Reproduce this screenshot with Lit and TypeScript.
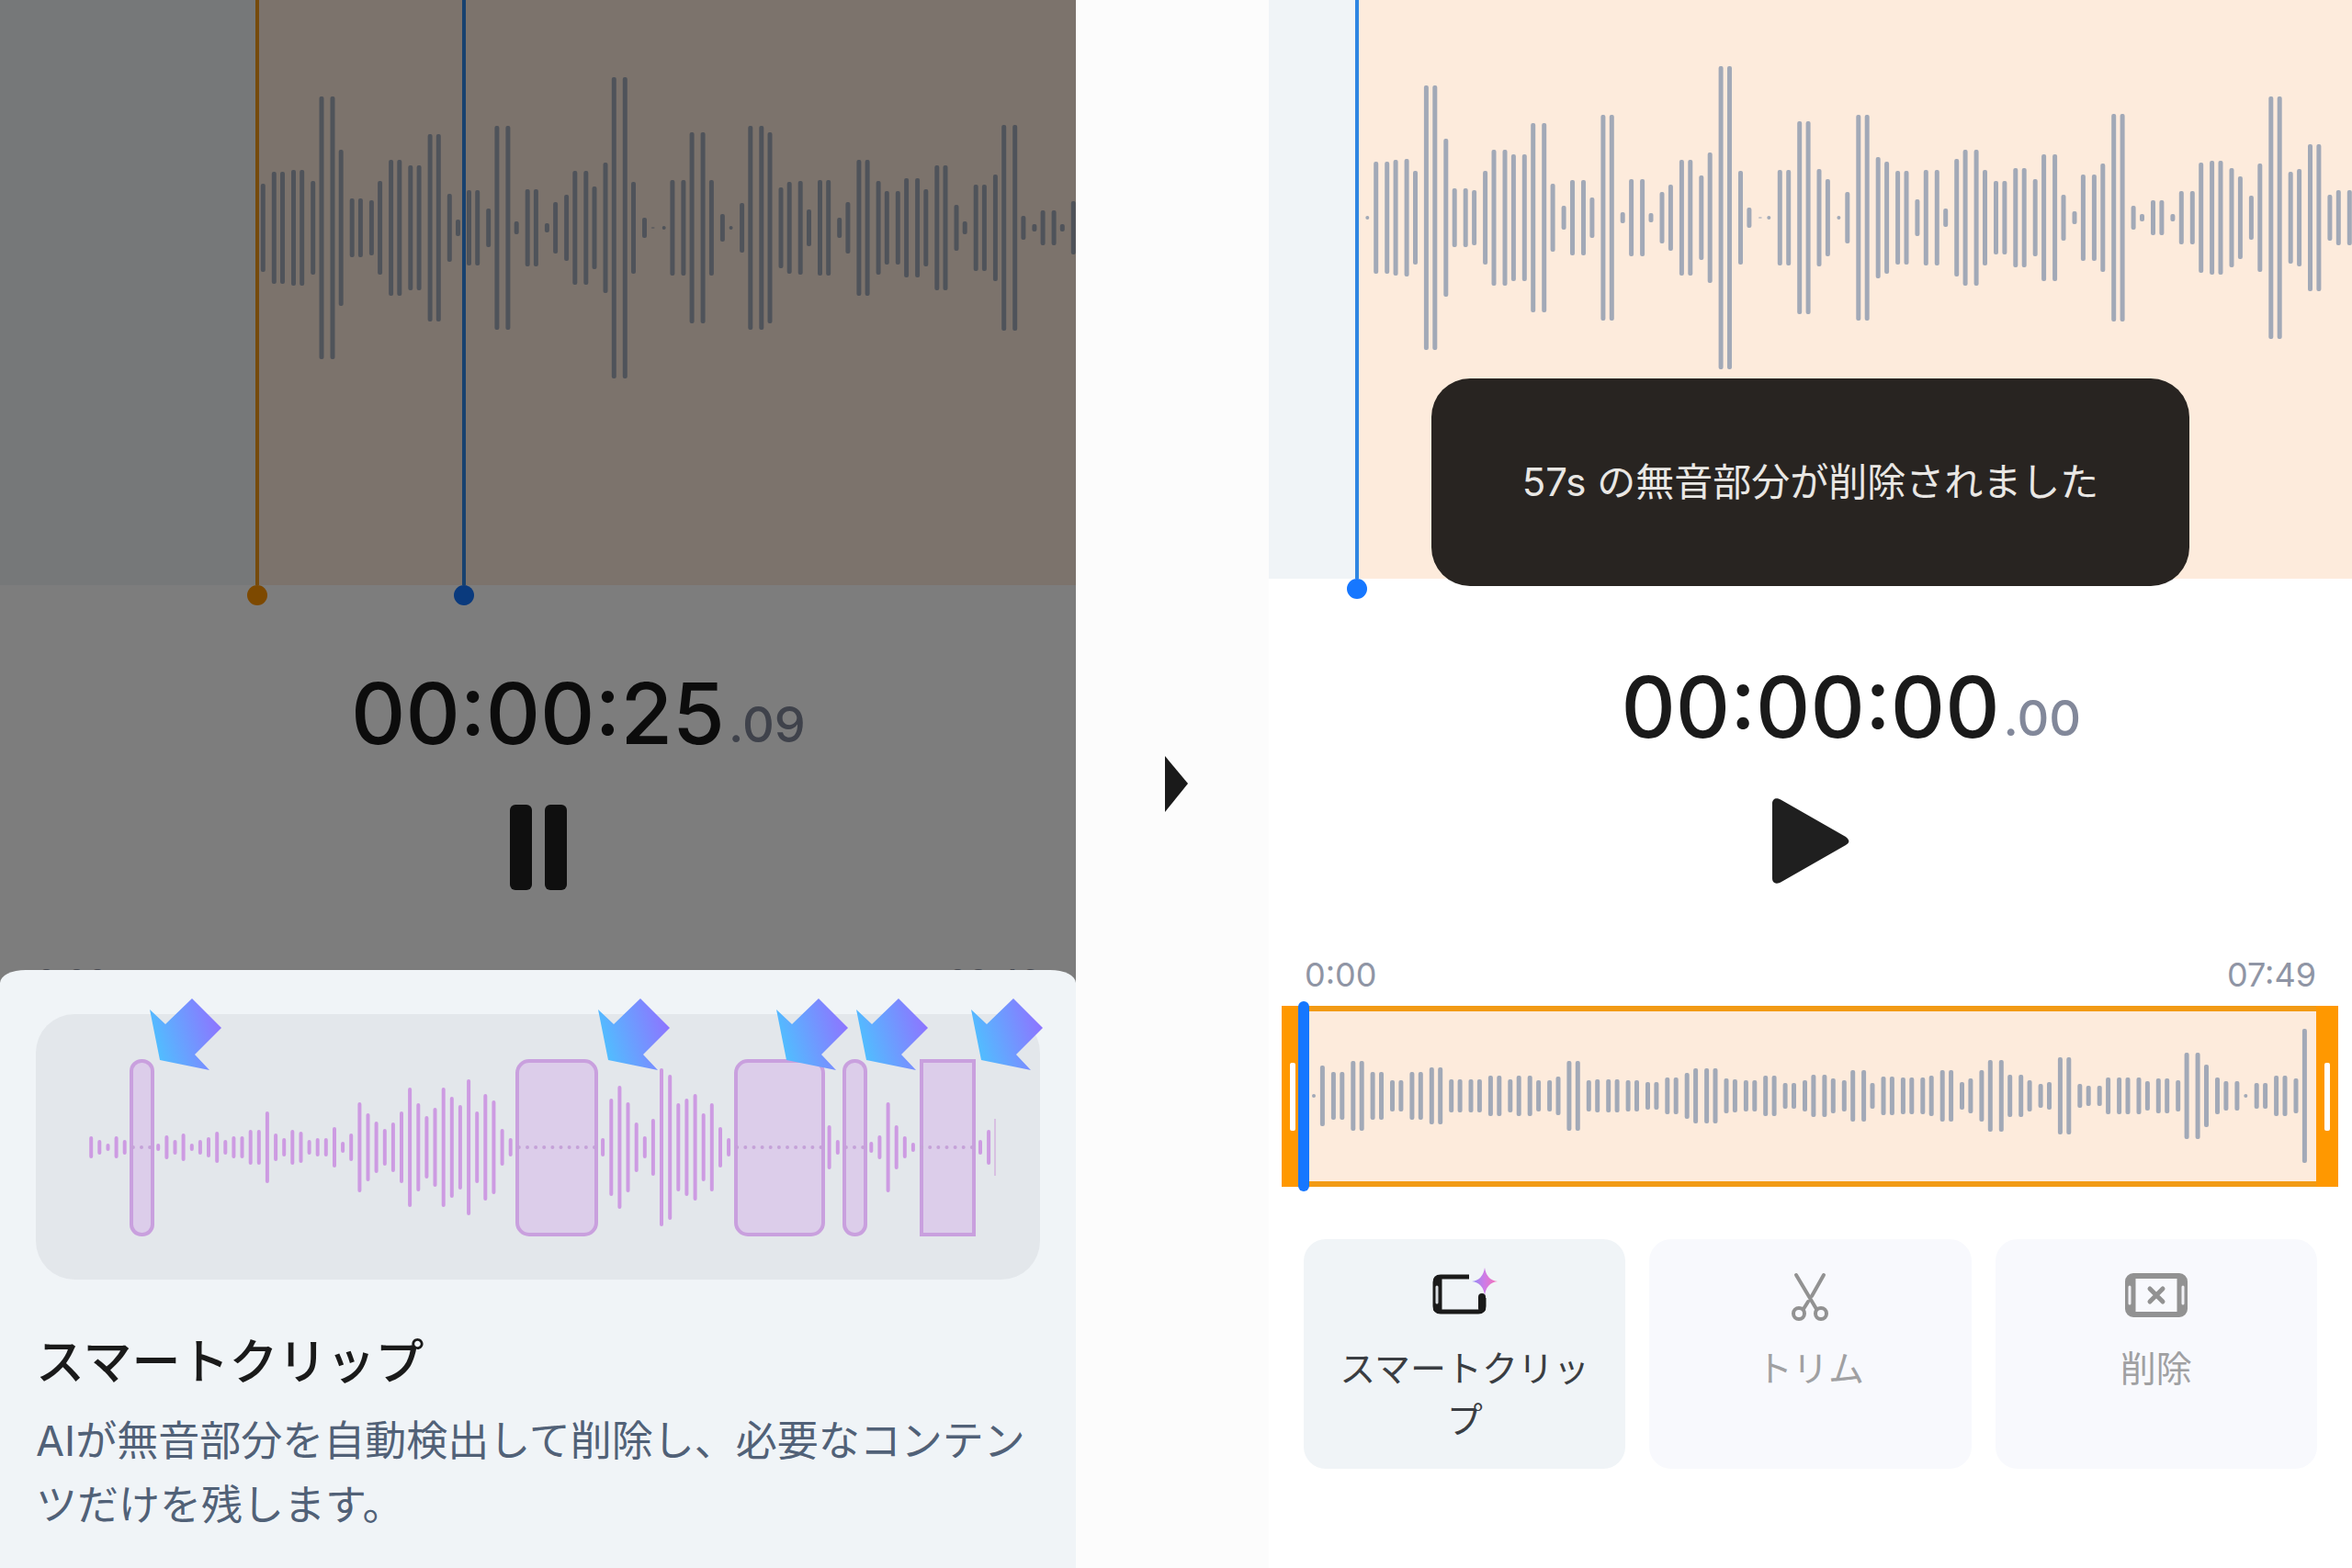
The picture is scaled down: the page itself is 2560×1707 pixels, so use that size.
import { LitElement, html, svg, css } from "lit";
import { customElement, property } from "lit/decorators.js";

/** How the bars of a waveform are spread: they come in pairs with a fixed period. */
interface Spread {
  start: number;
  period: number;
  second: number;
}

const BAR = 5;

const bars = (levels: number[], middle: number, s: Spread, cls: string) =>
  levels.map((level, i) => {
    const x = s.start + Math.floor(i / 2) * s.period + (i % 2 ? s.second : 0);
    const w = level <= 2 ? 4 : BAR;
    return svg`<rect class=${level <= 1 ? cls + " faint" : cls}
      x=${(x - w / 2).toFixed(1)} y=${middle - level} width=${w} height=${level * 2} rx="2"></rect>`;
  });

const playingLevels = [
  48, 61, 61, 63, 63, 51, 143, 143, 85, 32, 32, 30, 51, 74, 74, 68, 68, 102, 102, 37,
  9, 41, 41, 21, 111, 111, 7, 42, 42, 5, 28, 36, 62, 62, 45, 71, 164, 164, 50, 11,
  1, 2, 52, 52, 104, 104, 52, 15, 2, 27, 111, 111, 104, 44, 50, 51, 20, 52, 52, 11,
  28, 74, 74, 51, 40, 40, 54, 54, 42, 68, 68, 25, 7, 47, 47, 58, 112, 112, 13, 4,
  19, 19, 4, 29,
];

const trimmedLevels = [
  2, 61, 61, 63, 64, 51, 144, 144, 86, 32, 32, 30, 51, 74, 74, 69, 69, 103, 103, 37,
  13, 41, 41, 22, 112, 112, 6, 42, 42, 5, 28, 36, 63, 63, 46, 71, 165, 165, 51, 11,
  1, 2, 52, 52, 105, 105, 53, 42, 2, 28, 112, 112, 66, 61, 51, 51, 20, 52, 52, 10,
  64, 74, 74, 52, 40, 40, 54, 54, 42, 69, 69, 25, 7, 47, 47, 59, 113, 113, 13, 4,
  19, 19, 4, 29, 29, 60, 62, 62, 54, 45, 24, 59, 132, 132, 50, 53, 80, 80, 25, 30,
  30,
];

const overviewLevels = [
  2, 33, 26, 26, 38, 38, 26, 26, 17, 17, 26, 26, 31, 31, 18, 18, 18, 18, 22, 22,
  18, 22, 22, 17, 17, 21, 38, 38, 17, 18, 18, 18, 17, 17, 15, 15, 20, 20, 25, 30,
  30, 30, 19, 18, 17, 17, 22, 22, 14, 14, 17, 23, 23, 19, 17, 28, 28, 14, 21, 21,
  20, 20, 20, 22, 28, 28, 15, 19, 28, 39, 39, 23, 23, 17, 13, 15, 42, 42, 13, 11,
  11, 20, 20, 20, 20, 16, 19, 19, 17, 47, 47, 34, 20, 16, 16, 2, 14, 14, 22, 22,
  19, 73,
];

/** A level of 0 is silence and is drawn as a dot. */
const silence = (n: number) => new Array<number>(n).fill(0);
const clipLevels = [
  12, 8, 4, 12, 8, ...silence(3),
  4, 13, 8, 15, 4, 8, 11, 17, 8, 12, 12, 19, 19, 39, 15, 10, 19, 17, 8, 10, 10, 22,
  6, 15, 49, 37, 28, 20, 27, 39, 65, 48, 34, 43, 65, 55, 46, 74, 39, 58, 51, 20, 10,
  ...silence(10),
  10, 53, 67, 49, 27, 12, 31, 86, 79, 48, 53, 58, 37, 48, 22, 10, ...silence(11),
  24, 8, ...silence(3), 6, 13, 49, 24, 12, 5, ...silence(7), 8, 19,
];

const silentSpans = [
  { x: 104, w: 23, r: 11 },
  { x: 524, w: 86, r: 13 },
  { x: 762, w: 95, r: 13 },
  { x: 880, w: 23, r: 11 },
  { x: 964, w: 57, r: 0 },
];
const pointers = [124, 612, 806, 893, 1018];

@customElement("wave-stage")
class WaveStage extends LitElement {
  @property({ attribute: false }) levels: number[] = [];
  @property({ attribute: false }) spread!: Spread;
  @property({ type: Number }) width = 1171;
  @property({ type: Number }) height = 637;
  @property({ type: Number }) middle = 248;
  @property({ type: Number }) clipStart = 0;
  @property({ type: Number }) playhead = 0;
  @property({ type: Boolean }) marker = false;

  static styles = css`
    :host { display: block; position: relative; }
    .wave { display: block; width: 100%; height: auto; }
    .before { fill: #f0f4f7; }
    .clip { fill: #fdebdc; }
    .bar { fill: #a2a9b7; }
    .faint { opacity: 0.6; }
    .line {
      position: absolute; top: 0; bottom: 0; width: 4px;
      transform: translateX(-50%); background: #2f86e2;
    }
    .line::after {
      content: ""; position: absolute; left: -9px; bottom: -22px;
      width: 22px; height: 22px; border-radius: 50%; background: #1677ff;
    }
    .line.start { background: #f09a1a; }
    .line.start::after { background: #ff9500; }
  `;

  render() {
    const at = (x: number) => `left:${((x / this.width) * 100).toFixed(3)}%`;
    return html`
      <svg class="wave" viewBox="0 0 ${this.width} ${this.height}" aria-hidden="true">
        <rect class="before" width=${this.clipStart} height=${this.height}></rect>
        <rect class="clip" x=${this.clipStart} width=${this.width - this.clipStart} height=${this.height}></rect>
        ${bars(this.levels, this.middle, this.spread, "bar")}
      </svg>
      ${this.marker ? html`<div class="line start" style=${at(this.clipStart)}></div>` : null}
      <div class="line" style=${at(this.playhead)}></div>
      <slot></slot>
    `;
  }
}

@customElement("time-readout")
class TimeReadout extends LitElement {
  @property() main = "";
  @property() fraction = "";

  static styles = css`
    :host {
      display: grid; grid-template-columns: 1fr auto 1fr; align-items: end;
      font-family: Inter, "Liberation Sans", sans-serif;
    }
    .main { grid-column: 2; font-size: 92px; line-height: 96px; font-weight: 500; color: #1a1a1a; }
    .fraction { padding-left: 4px; font-size: 54px; line-height: 72px; font-weight: 500; color: #82889a; }
  `;

  render() {
    return html`<span class="main">${this.main}</span><span class="fraction">${this.fraction}</span>`;
  }
}

@customElement("smart-clip-sheet")
class SmartClipSheet extends LitElement {
  static styles = css`
    :host {
      display: block; box-sizing: border-box; padding: 48px 39px 33px;
      border-radius: 28px 28px 0 0 / 14px 14px 0 0; background: #f0f4f7;
      font-family: Inter, "Noto Sans CJK JP", sans-serif;
    }
    .card { border-radius: 42px; background: #e3e7eb; }
    .art { display: block; width: 100%; height: auto; overflow: visible; }
    .span { fill: #dccdea; stroke: #c9a0de; stroke-width: 4; }
    .bar { fill: #cd9be2; }
    .dot { fill: #c5a2d8; }
    .end { fill: #d8c0e2; }
    .pointer { fill: url(#pointer); }
    .title { margin: 50px 0 0; font-size: 53px; line-height: 80px; font-weight: 500; color: #1a1a1a; }
    .text { margin: 11px 0 0; font-size: 45px; line-height: 70px; color: #516177; }
  `;

  render() {
    return html`
      <div class="card">
        <svg class="art" viewBox="0 0 1093 289" aria-hidden="true">
          <defs>
            <linearGradient id="pointer" x1="0" y1="0.7" x2="1" y2="0.4">
              <stop offset="0.1" stop-color="#52bcff"></stop>
              <stop offset="1" stop-color="#8e74ff"></stop>
            </linearGradient>
          </defs>
          ${silentSpans.map(
            (s) => svg`<rect class="span" x=${s.x} y="51" width=${s.w} height="189" rx=${s.r}></rect>`
          )}
          ${clipLevels.map((level, i) => {
            const x = 60.2 + i * 9.13;
            return level
              ? svg`<rect class="bar" x=${(x - 2).toFixed(1)} y=${145 - level} width="4" height=${level * 2} rx="2"></rect>`
              : svg`<circle class="dot" cx=${x.toFixed(1)} cy="145" r="2"></circle>`;
          })}
          <rect class="end" x="1043" y="114" width="2" height="62"></rect>
          ${pointers.map(
            (x) => svg`<path class="pointer" transform="translate(${x} -17)" d="M0 12 17 28 46 0 78 32 49 61 65 78 11 67Z"></path>`
          )}
        </svg>
      </div>
      <h2 class="title">スマートクリップ</h2>
      <p class="text">AIが無音部分を自動検出して削除し、必要なコンテンツだけを残します。</p>
    `;
  }
}

@customElement("trim-track")
class TrimTrack extends LitElement {
  static styles = css`
    :host { display: block; position: relative; }
    .frame {
      display: grid; grid-template-columns: 24px 1fr 24px; background: #ff9800;
      border: solid #f29a14; border-width: 6px 0;
    }
    .handle {
      display: grid; place-items: center; padding: 0; margin: -6px 0;
      border: 0; background: #ff9800;
    }
    .grip { width: 6px; height: 74px; border-radius: 2px; background: #fff; }
    .wave { display: block; width: 100%; height: auto; background: #fdebdc; }
    .bar { fill: #a2a9b7; }
    .faint { opacity: 0.6; }
    .playhead {
      position: absolute; left: 18px; top: -5px; bottom: -5px;
      width: 12px; border-radius: 6px; background: #1677ff;
    }
  `;

  render() {
    return html`
      <div class="frame">
        <button class="handle" aria-label="開始位置"><span class="grip"></span></button>
        <svg class="wave" viewBox="0 0 1102 185" aria-hidden="true">
          ${bars(overviewLevels, 92, { start: 11, period: 21.38, second: 9.4 }, "bar")}
        </svg>
        <button class="handle" aria-label="終了位置"><span class="grip"></span></button>
      </div>
      <div class="playhead"></div>
    `;
  }
}

const smartClipIcon = svg`
  <defs>
    <linearGradient id="spark" x1="0" y1="0" x2="1" y2="0">
      <stop offset="0" stop-color="#8f8cf5"></stop>
      <stop offset="0.5" stop-color="#cf7be6"></stop>
      <stop offset="1" stop-color="#f772b4"></stop>
    </linearGradient>
  </defs>
  <path d="M45 9H14Q8 9 8 15V41Q8 47 14 47H55Q61 47 61 41V32" fill="none" stroke="#1a1a1a" stroke-width="5"></path>
  <path d="M11 11V46" stroke="#1a1a1a" stroke-width="9"></path>
  <path d="M10 20V37" stroke="#d8dce0" stroke-width="3" stroke-linecap="round"></path>
  <path d="M59 31V43" stroke="#1a1a1a" stroke-width="8" stroke-linecap="round"></path>
  <path d="M62 -1Q64 12.500 76 14Q64 15.500 62 29Q60 15.500 48 14Q60 12.500 62 -1Z" fill="url(#spark)"></path>`;

const scissorsIcon = svg`
  <g fill="none" stroke="#929292" stroke-width="4" stroke-linecap="round">
    <path d="M25 7 47 44M55 7 42 30M38 36 33 44"></path>
    <circle cx="28" cy="49" r="6"></circle>
    <circle cx="52" cy="49" r="6"></circle>
  </g>`;

const deleteIcon = svg`
  <g fill="none" stroke="#929292">
    <rect x="9" y="8" width="62" height="42" rx="6" stroke-width="6"></rect>
    <path d="M14 9V49M66 9V49" stroke-width="7"></path>
    <path d="M11 20V38M69 20V38" stroke="#f1f1f5" stroke-width="3" stroke-linecap="round"></path>
    <path d="M33 22 47 36M47 22 33 36" stroke-width="5" stroke-linecap="round"></path>
  </g>`;

const tools = [
  { label: "スマートクリップ", icon: smartClipIcon, disabled: false },
  { label: "トリム", icon: scissorsIcon, disabled: true },
  { label: "削除", icon: deleteIcon, disabled: true },
];

@customElement("app-root")
class AppRoot extends LitElement {
  static styles = css`
    :host {
      display: grid; grid-template-columns: 1171fr 210fr 1179fr; min-height: 100vh;
      background: #fcfcfc; font-family: Inter, "Noto Sans CJK JP", sans-serif;
    }
    .screen { position: relative; min-width: 0; background: #fff; overflow: hidden; }
    .readout { margin-top: 92px; }
    .transport {
      display: block; margin: 51px auto 0; padding: 0; border: 0; background: none; height: 93px;
    }
    .glyph { display: block; height: 93px; width: 84px; fill: #1f1f1f; }
    .times {
      display: flex; justify-content: space-between; margin-top: 79px; padding: 0 39px;
      font-size: 36px; line-height: 40px; color: #8f95a5;
    }
    .scrim { position: absolute; inset: 0; background: rgba(0, 0, 0, 0.51); }
    .sheet { position: absolute; left: 0; right: 0; bottom: 0; }
    .step { display: grid; place-items: center; }
    .next { width: 34px; height: 61px; fill: #1a1a1a; }
    .toast {
      position: absolute; left: 15%; right: 15%; bottom: -8px; height: 226px;
      display: grid; place-items: center; border-radius: 42px; background: #282421;
      font-size: 42px; line-height: 60px; color: #e9e7e4; white-space: nowrap;
    }
    .track { margin: 14px 15px 0 14px; }
    .tools {
      display: grid; grid-template-columns: repeat(3, 1fr); gap: 26px; padding: 57px 38px 0;
    }
    .tool {
      display: flex; flex-direction: column; align-items: center; gap: 25px; min-width: 0;
      padding: 32px 30px 25px; border: 0; border-radius: 24px; background: #f0f4f7;
      font: inherit; font-size: 39px; line-height: 56px; color: #3a3d42;
    }
    .tool:disabled { background: #f8f9fd; color: #a0a0a2; }
    .icon { display: block; width: 80px; height: 56px; flex: none; overflow: visible; }
  `;

  render() {
    return html`
      <section class="screen">
        <wave-stage
          .levels=${playingLevels} .spread=${{ start: 286.3, period: 21.22, second: 12 }}
          .width=${1171} .height=${637} .middle=${248} .clipStart=${280} .playhead=${505} .marker=${true}
        ></wave-stage>
        <time-readout class="readout" main="00:00:25" fraction=".09"></time-readout>
        <button class="transport" aria-label="一時停止">
          <svg class="glyph" viewBox="0 0 84 93">
            <rect x="11" width="24" height="93" rx="6"></rect>
            <rect x="49" width="24" height="93" rx="6"></rect>
          </svg>
        </button>
        <div class="times"><span>0:00</span><span>08:46</span></div>
        <div class="scrim"></div>
        <smart-clip-sheet class="sheet"></smart-clip-sheet>
      </section>

      <div class="step">
        <svg class="next" viewBox="0 0 34 61" aria-hidden="true"><path d="M9 0 34 30 9 61Z"></path></svg>
      </div>

      <section class="screen">
        <wave-stage
          .levels=${trimmedLevels} .spread=${{ start: 107.3, period: 21.38, second: 9.4 }}
          .width=${1179} .height=${630} .middle=${237} .clipStart=${97} .playhead=${96}
        >
          <div class="toast" role="status">57s の無音部分が削除されました</div>
        </wave-stage>
        <time-readout class="readout" main="00:00:00" fraction=".00"></time-readout>
        <button class="transport" aria-label="再生">
          <svg class="glyph" viewBox="0 0 84 93">
            <path d="M0 6C0 0 5 -1 10 2L80 42Q87 47 80 51L10 91C5 94 0 93 0 87Z"></path>
          </svg>
        </button>
        <div class="times"><span>0:00</span><span>07:49</span></div>
        <trim-track class="track"></trim-track>
        <div class="tools">
          ${tools.map(
            (t) => html`<button class="tool" ?disabled=${t.disabled}>
              <svg class="icon" viewBox="0 0 80 56" aria-hidden="true">${t.icon}</svg>
              <span>${t.label}</span>
            </button>`
          )}
        </div>
      </section>
    `;
  }
}
